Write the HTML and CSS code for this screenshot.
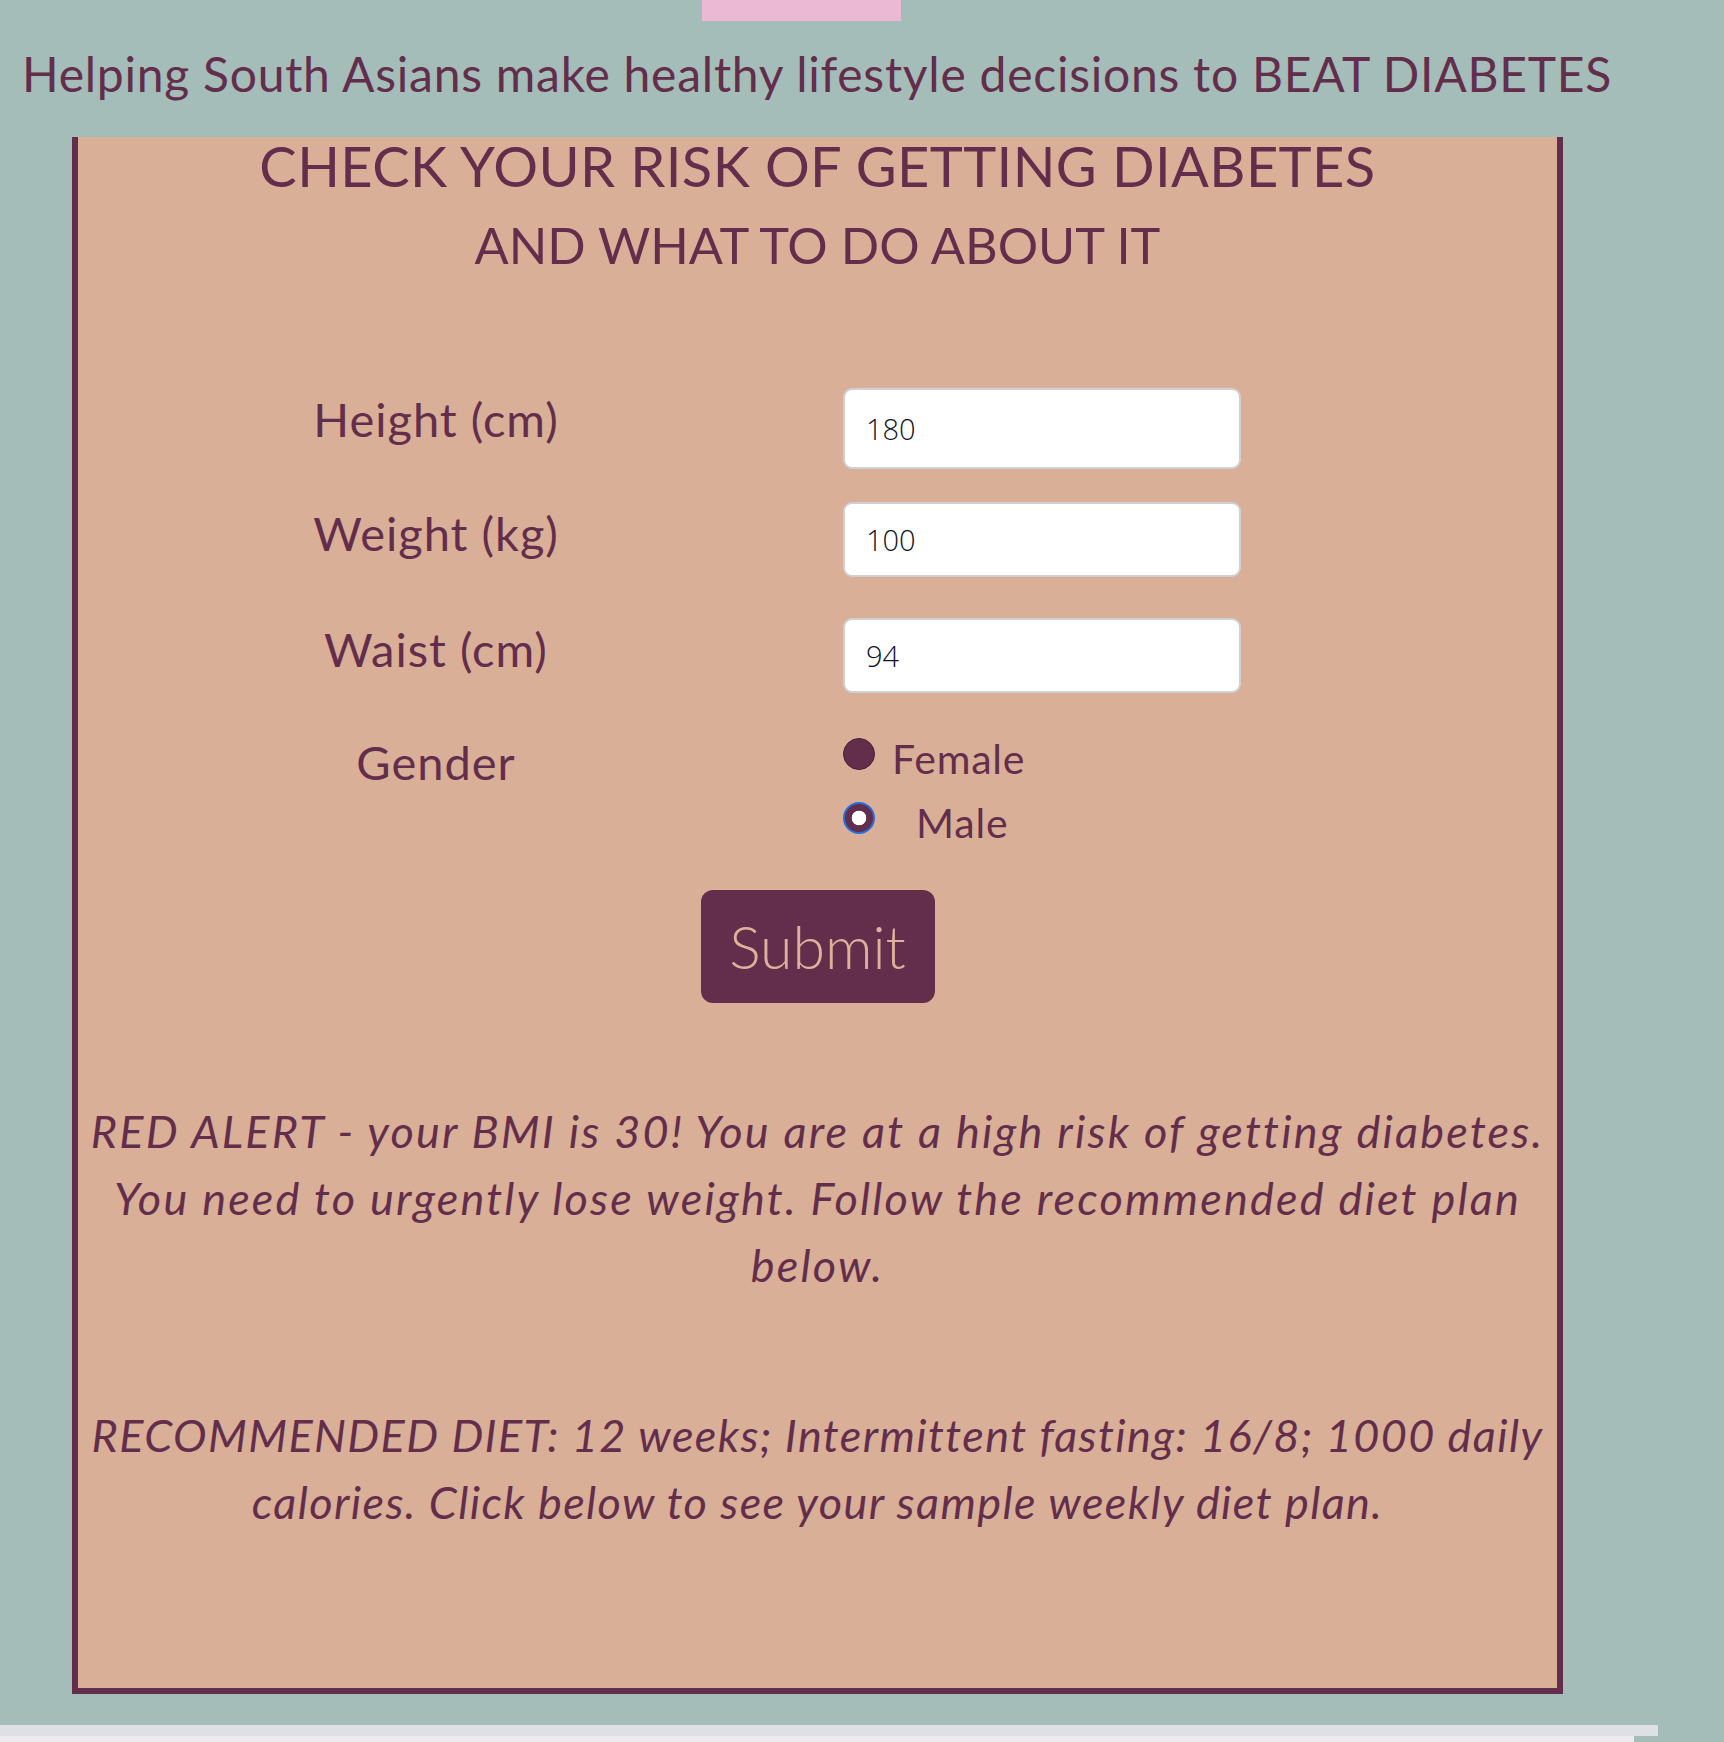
FILE: index.html
```html
<!DOCTYPE html>
<html lang="en">
<head>
<meta charset="utf-8">
<title>Beat Diabetes</title>
<link rel="stylesheet" href="styles.css">
</head>
<body>
<div class="top-tab"></div>
<h1 class="tagline">Helping South Asians make healthy lifestyle decisions to BEAT DIABETES</h1>
<main class="card">
  <h2 class="card-title">CHECK YOUR RISK OF GETTING DIABETES</h2>
  <h3 class="card-subtitle">AND WHAT TO DO ABOUT IT</h3>
  <form class="risk-form">
    <div class="fields">
      <label class="field-label" for="height">Height (cm)</label>
      <input class="field-input field-input--lg" id="height" type="text" value="180">
      <label class="field-label" for="weight">Weight (kg)</label>
      <input class="field-input" id="weight" type="text" value="100">
      <label class="field-label" for="waist">Waist (cm)</label>
      <input class="field-input" id="waist" type="text" value="94">
      <span class="field-label">Gender</span>
      <div class="radio-group">
        <label class="option"><input class="radio" type="radio" name="gender" value="female"><span class="option-text">Female</span></label>
        <label class="option"><input class="radio radio--checked" type="radio" name="gender" value="male" checked><span class="option-text option-text--indent">Male</span></label>
      </div>
    </div>
    <button class="submit" type="button">Submit</button>
  </form>
  <p class="result result--alert">RED ALERT - your BMI is 30! You are at a high risk of getting diabetes.<br>You need to urgently lose weight. Follow the recommended diet plan<br>below.</p>
  <p class="result result--diet">RECOMMENDED DIET: 12 weeks; Intermittent fasting: 16/8; 1000 daily<br>calories. Click below to see your sample weekly diet plan.</p>
</main>
<div class="footer-bar"></div>
<div class="footer-strip"></div>
</body>
</html>
```
FILE: styles.css
```css
html, body {
  margin: 0;
  padding: 0;
}
body {
  background: #a4bdb9;
  color: #632e4b;
  font-family: "Lato", "Open Sans", sans-serif;
  overflow: hidden;
}
.top-tab {
  width: 199px;
  height: 21px;
  margin-left: 702px;
  background: #ebb9d4;
}
.tagline {
  margin: 25px 0 35px 22px;
  font-size: 48px;
  line-height: 56px;
  letter-spacing: 0.75px;
  font-weight: 400;
  white-space: nowrap;
}
.card {
  box-sizing: border-box;
  width: 1491px;
  margin-left: 72px;
  background: #d9af98;
  border: 6px solid #632e4b;
  border-top: 0;
  padding: 1px 0 152px;
  text-align: center;
}
.card-title {
  margin: 0;
  font-size: 56px;
  line-height: 55px;
  letter-spacing: 0.4px;
  font-weight: 400;
}
.card-subtitle {
  margin: 26px 0 0;
  font-size: 50.5px;
  line-height: 51px;
  font-weight: 400;
}
.risk-form {
  margin-top: 118px;
  display: flex;
  flex-direction: column;
  align-items: center;
}
.fields {
  align-self: stretch;
  display: grid;
  grid-template-columns: 716px 398px;
  grid-template-rows: 114px 116px 113px auto;
  column-gap: 49px;
  align-items: start;
  text-align: left;
}
.field-label {
  padding-top: 8px;
  font-size: 47px;
  line-height: 46px;
  letter-spacing: 1px;
  text-align: center;
}
.field-input {
  box-sizing: border-box;
  width: 398px;
  height: 75px;
  margin: 0;
  padding: 0 21px;
  border: 2px solid #cfcfd4;
  border-radius: 9px;
  background: #fff;
  font-family: "Open Sans", sans-serif;
  font-weight: 300;
  font-size: 29px;
  color: #10142a;
  outline: none;
}
.field-input--lg {
  height: 81px;
}
.radio-group {
  display: flex;
  flex-direction: column;
  gap: 18px;
}
.option {
  display: flex;
  align-items: flex-start;
  height: 46px;
}
.radio {
  appearance: none;
  -webkit-appearance: none;
  box-sizing: border-box;
  width: 32px;
  height: 32px;
  margin: 7px 0 0;
  border-radius: 50%;
  background: #632e4b;
  border: 1px solid #4c2138;
}
.radio--checked {
  border: 2px solid #1f6fe6;
  background: radial-gradient(circle, #fff 0 7px, #632e4b 7.6px);
}
.option-text {
  margin-left: 17px;
  padding-top: 5px;
  font-size: 41px;
  line-height: 46px;
  letter-spacing: 0.8px;
}
.option-text--indent {
  margin-left: 41px;
}
.submit {
  margin: 49px 0 0;
  width: 234px;
  height: 113px;
  border: 0;
  border-radius: 12px;
  background: #632e4b;
  color: #dcb29b;
  font-family: "Lato", sans-serif;
  font-weight: 300;
  font-size: 59px;
  padding: 0;
}
.result {
  margin: 95px 0 0;
  font-size: 45px;
  line-height: 67px;
  letter-spacing: 1.5px;
  font-style: italic;
}
.result--alert {
  letter-spacing: 2.2px;
}
.result--diet {
  margin-top: 103px;
  letter-spacing: 1.4px;
}
.footer-bar {
  width: 1658px;
  height: 11px;
  margin-top: 31px;
  background: #dde1e5;
}
.footer-strip {
  width: 1634px;
  height: 40px;
  background: #efe9f0;
}
```
